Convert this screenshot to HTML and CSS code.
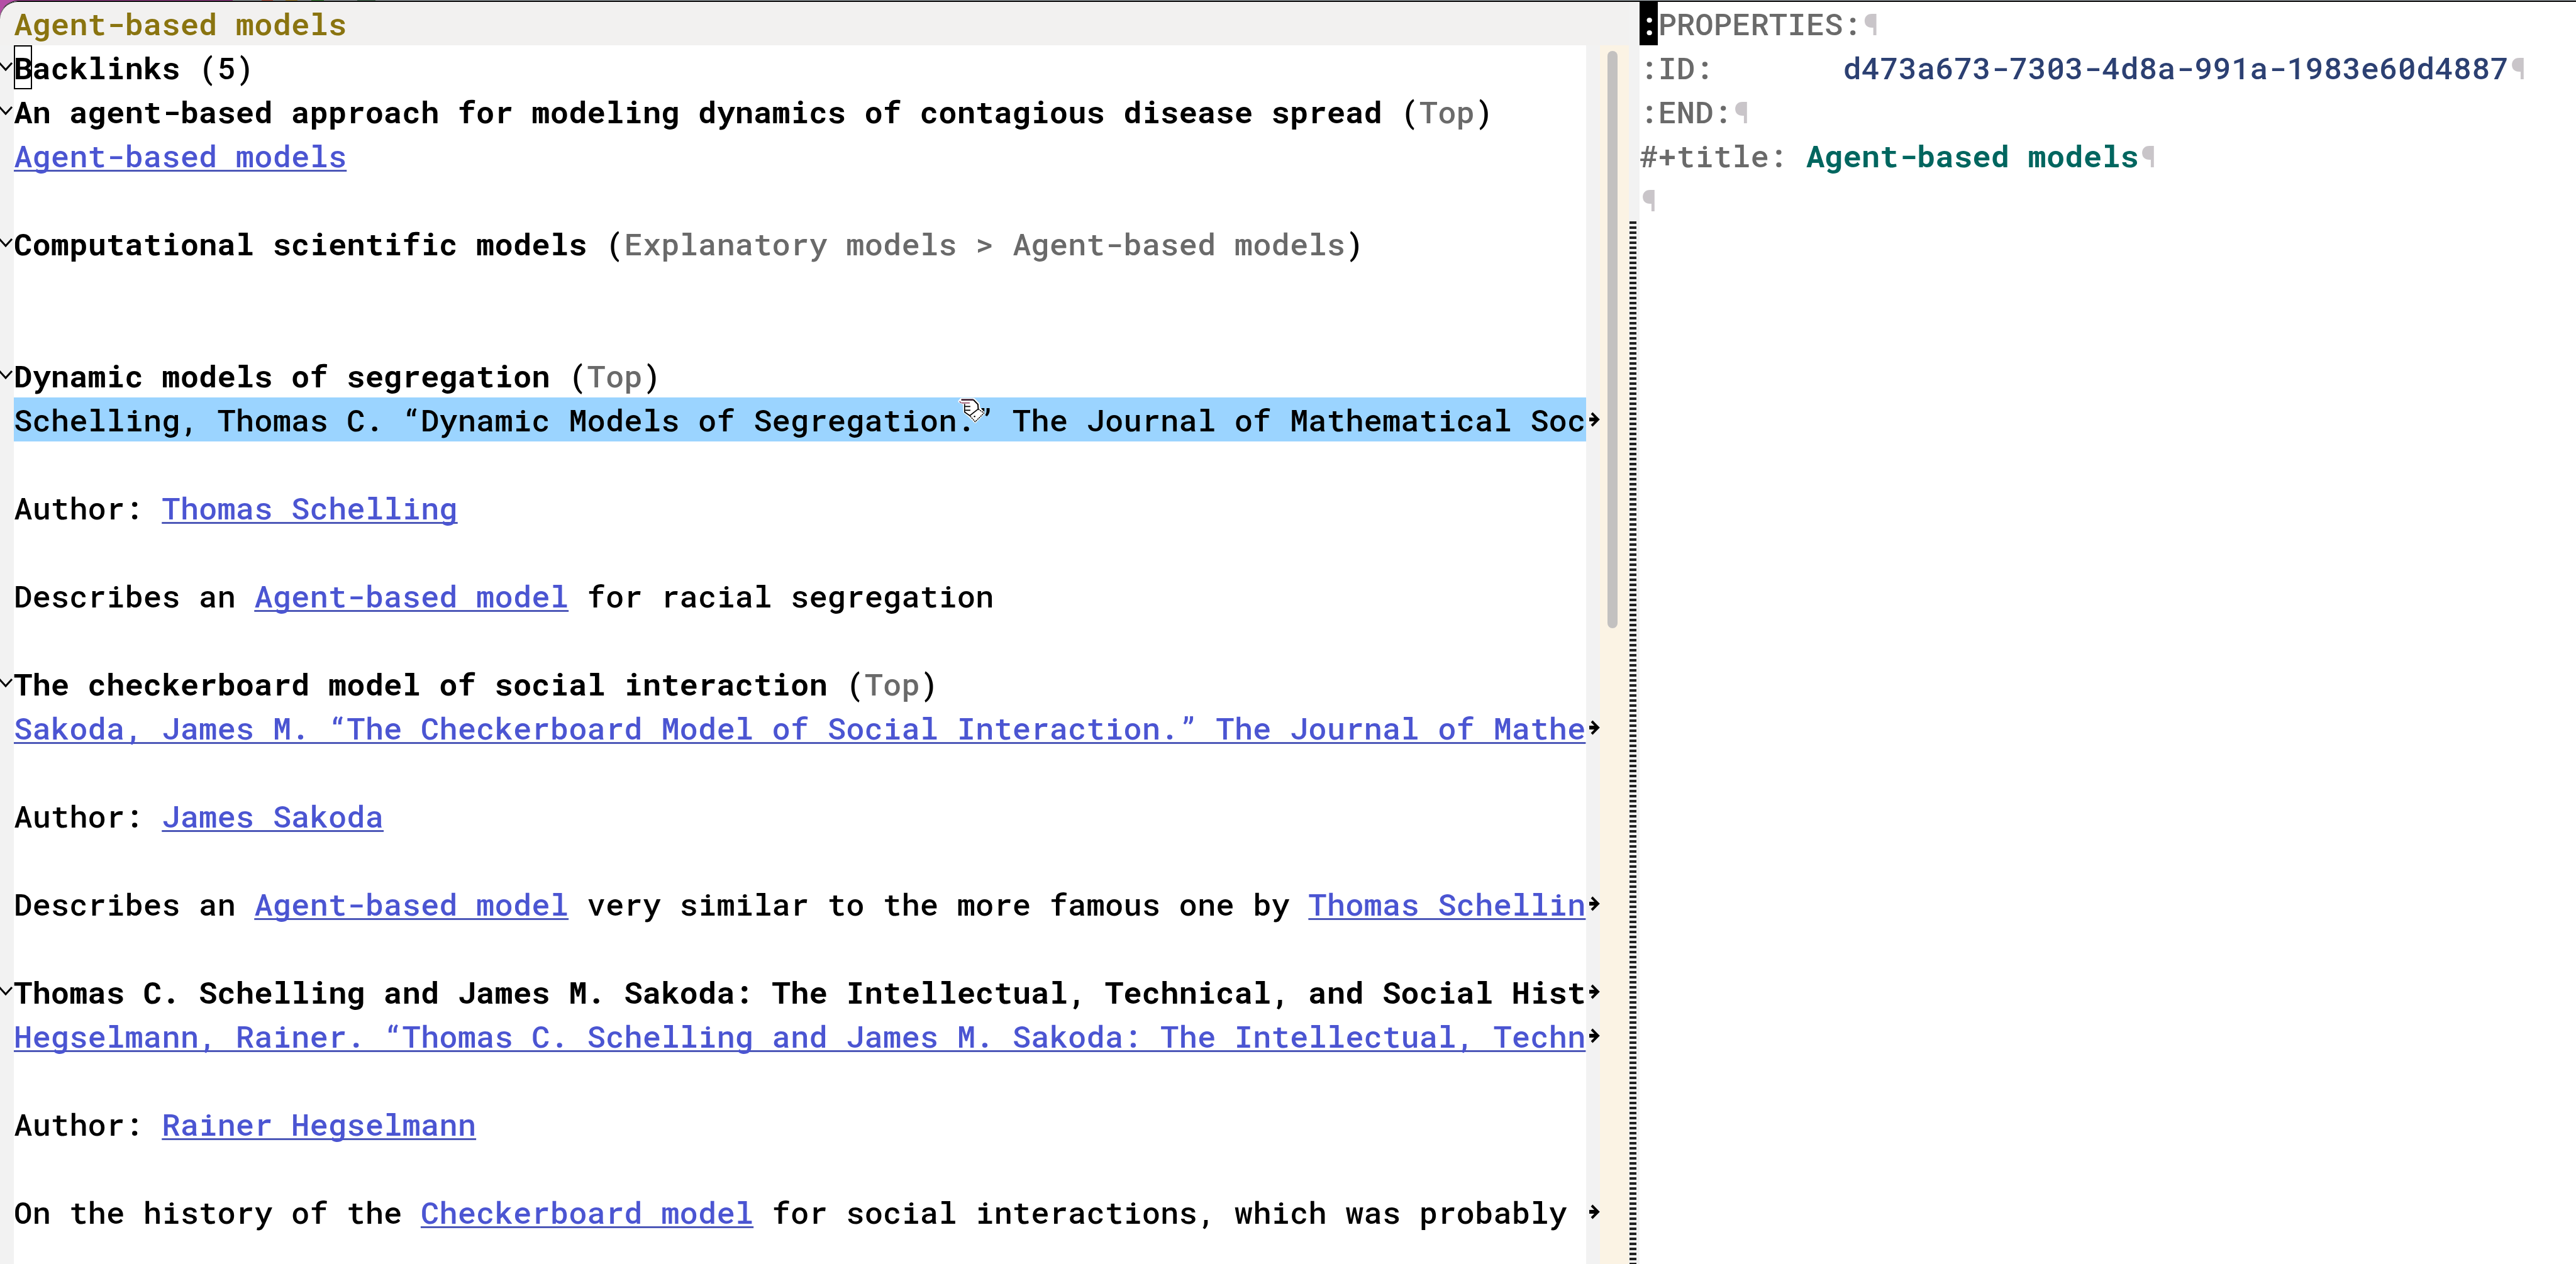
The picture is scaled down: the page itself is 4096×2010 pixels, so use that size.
FILE: index.html
```
<!DOCTYPE html>
<html lang="en">
<head>
<meta charset="utf-8">
<title>Agent-based models</title>
<link rel="stylesheet" href="styles.css">
</head>
<body>
<svg class="defs" aria-hidden="true">
  <symbol id="fold" viewBox="0 0 22 70">
    <path d="M-1 28 L9 39 L19 28" fill="none" stroke="#000" stroke-width="3"/>
  </symbol>
  <symbol id="more" viewBox="0 0 22 70">
    <path d="M5 35 H19" fill="none" stroke="#000" stroke-width="6"/>
    <path d="M9 25 L19 35 L9 45" fill="none" stroke="#000" stroke-width="4"/>
  </symbol>
</svg>
<div class="desktop"></div>
<div class="frame">
  <section class="backlinks" aria-label="Backlinks">
    <header class="header-line">Agent-based models</header>
    <div class="body">
      <main class="lines">
        <div class="line"><svg class="fringe"><use href="#fold"/></svg><div class="text"><b><span class="box-cursor">B</span>acklinks</b> (5)</div></div>
        <div class="line"><svg class="fringe"><use href="#fold"/></svg><div class="text"><b>An agent-based approach for modeling dynamics of contagious disease spread</b> (<span class="dim">Top</span>)</div></div>
        <div class="line"><div class="text"><a href="#agent-based-models">Agent-based models</a></div></div>
        <div class="line"><div class="text"></div></div>
        <div class="line"><svg class="fringe"><use href="#fold"/></svg><div class="text"><b>Computational scientific models</b> (<span class="dim">Explanatory models &gt; Agent-based models</span>)</div></div>
        <div class="line"><div class="text"></div></div>
        <div class="line"><div class="text"></div></div>
        <div class="line"><svg class="fringe"><use href="#fold"/></svg><div class="text"><b>Dynamic models of segregation</b> (<span class="dim">Top</span>)</div></div>
        <div class="line"><div class="text hover">Schelling, Thomas C. “Dynamic Models of Segregation.” The Journal of Mathematical Soc<svg class="pointer" viewBox="0 0 270 270" aria-hidden="true">
          <path d="M42 68 L55 52 H138 L170 84 L174 112 L206 145 L148 204 L106 162 L76 138 L74 84 Z" fill="#fff" stroke="#fff" stroke-width="14" stroke-linejoin="round"/>
          <path d="M56 57 H136" stroke="#3a1a2c" stroke-width="11" fill="none"/>
          <path d="M58 78 H112 M44 68 L56 78" stroke="#8a3a58" stroke-width="6" fill="none"/>
          <path d="M136 57 L166 88 L168 118" stroke="#000" stroke-width="8" fill="none"/>
          <path d="M78 84 V138 L112 162 L168 118" stroke="#000" stroke-width="7" fill="none"/>
          <path d="M80 101 H116 M80 126 H116" stroke="#000" stroke-width="7" fill="none"/>
          <path d="M168 118 L206 145 L148 202 L112 162" stroke="#000" stroke-width="6" stroke-dasharray="10 4" fill="none"/>
          <circle cx="144" cy="167" r="5" fill="#000"/>
        </svg></div><svg class="fringe end"><use href="#more"/></svg></div>
        <div class="line"><div class="text"></div></div>
        <div class="line"><div class="text">Author: <a href="#thomas-schelling">Thomas Schelling</a></div></div>
        <div class="line"><div class="text"></div></div>
        <div class="line"><div class="text">Describes an <a href="#agent-based-models">Agent-based model</a> for racial segregation</div></div>
        <div class="line"><div class="text"></div></div>
        <div class="line"><svg class="fringe"><use href="#fold"/></svg><div class="text"><b>The checkerboard model of social interaction</b> (<span class="dim">Top</span>)</div></div>
        <div class="line"><div class="text"><a href="#sakoda-paper">Sakoda, James M. “The Checkerboard Model of Social Interaction.” The Journal of Mathe</a></div><svg class="fringe end"><use href="#more"/></svg></div>
        <div class="line"><div class="text"></div></div>
        <div class="line"><div class="text">Author: <a href="#james-sakoda">James Sakoda</a></div></div>
        <div class="line"><div class="text"></div></div>
        <div class="line"><div class="text">Describes an <a href="#agent-based-models">Agent-based model</a> very similar to the more famous one by <a href="#thomas-schelling">Thomas Schellin</a></div><svg class="fringe end"><use href="#more"/></svg></div>
        <div class="line"><div class="text"></div></div>
        <div class="line"><svg class="fringe"><use href="#fold"/></svg><div class="text"><b>Thomas C. Schelling and James M. Sakoda: The Intellectual, Technical, and Social Hist</b></div><svg class="fringe end"><use href="#more"/></svg></div>
        <div class="line"><div class="text"><a href="#hegselmann-paper">Hegselmann, Rainer. “Thomas C. Schelling and James M. Sakoda: The Intellectual, Techn</a></div><svg class="fringe end"><use href="#more"/></svg></div>
        <div class="line"><div class="text"></div></div>
        <div class="line"><div class="text">Author: <a href="#rainer-hegselmann">Rainer Hegselmann</a></div></div>
        <div class="line"><div class="text"></div></div>
        <div class="line"><div class="text">On the history of the <a href="#checkerboard-model">Checkerboard model</a> for social interactions, which was probably</div><svg class="fringe end"><use href="#more"/></svg></div>
        <div class="line rest"><div class="text"></div></div>
      </main>
      <div class="scrollbar"><div class="thumb"></div></div>
    </div>
  </section>
  <section class="note" aria-label="Note">
    <div class="note-line dim"><span class="block-cursor">:</span>PROPERTIES:<span class="eol">¶</span></div>
    <div class="note-line dim">:ID:       <span class="value">d473a673-7303-4d8a-991a-1983e60d4887</span><span class="eol">¶</span></div>
    <div class="note-line dim">:END:<span class="eol">¶</span></div>
    <div class="note-line dim">#+title: <b class="doc-title">Agent-based models</b><span class="eol">¶</span></div>
    <div class="note-line"><span class="eol">¶</span></div>
    <div class="empty-lines"></div>
  </section>
</div>
</body>
</html>
```
FILE: styles.css
```
* { box-sizing: border-box; }

body {
  display: flex;
  flex-direction: column;
  height: 100vh;
  margin: 0;
  overflow: hidden;
  background: #b44ea6;
  color: #000;
  font-family: "Roboto Mono", "DejaVu Sans Mono", "Liberation Mono", monospace;
  font-size: 49px;
  font-weight: 500;
  line-height: 70px;
}

b { font-weight: 700; }

.defs { display: none; }

/* sliver of the desktop behind the frame */
.desktop {
  flex: none;
  height: 1px;
  background: linear-gradient(90deg,
    #b44ea6 370px, #b9c2c6 370px 416px, #dc7565 416px 434px,
    #b9c2c6 434px 454px, #c9a955 454px 473px, #b9c2c6 473px 495px,
    #4fa050 495px 515px, #b9c2c6 515px 568px, #638a72 568px 597px, #b9c2c6 597px);
}

.frame {
  flex: 1;
  min-height: 0;
  display: grid;
  grid-template-columns: 2590fr 1506fr;
  border-top: 1px solid #000;
  border-top-left-radius: 28px;
  overflow: hidden;
  background: #f2f2f2;
}

.backlinks {
  display: flex;
  flex-direction: column;
  min-width: 0;
  min-height: 0;
}

.header-line {
  flex: none;
  padding-left: 22px;
  border-top-left-radius: 28px;
  box-shadow: inset 0 1px #000;
  background: #f2f1f0;
  color: #8a7410;
  font-weight: 600;
}

.body {
  flex: 1;
  min-height: 0;
  display: flex;
}

.lines {
  flex: 1;
  min-width: 0;
  display: flex;
  flex-direction: column;
  overflow: hidden;
}

.line {
  flex: none;
  display: grid;
  grid-template-columns: 22px minmax(0, 1fr) 22px;
  min-height: 70px;
}

.fringe {
  display: block;
  grid-column: 1;
  grid-row: 1;
  width: 22px;
  height: 70px;
}

.fringe.end { grid-column: 3; }

.text {
  grid-column: 2;
  grid-row: 1;
  position: relative;
  overflow: hidden;
  white-space: pre;
  background: #fff;
}

.hover { background: #9bd4ff; }

.rest { flex: 1 0 auto; }

a {
  color: #4b55d2;
  text-decoration: underline;
  text-decoration-thickness: 3px;
  text-decoration-color: #4d58b8;
  text-decoration-skip-ink: none;
  text-underline-offset: 4px;
}

.dim { color: #6a6a6a; }

.box-cursor {
  display: inline-block;
  height: 70px;
  vertical-align: top;
  outline: 2px solid #000;
  outline-offset: -2px;
}

.pointer {
  position: absolute;
  left: 59.7%;
  top: -10px;
  width: 65px;
  height: 65px;
}

.scrollbar {
  flex: none;
  width: 46px;
  padding: 9px 18px 0 12px;
  background: #fbf3e4;
}

.thumb {
  height: 47.6%;
  border-radius: 8px;
  background: #c3c1c0;
}

.note {
  display: flex;
  flex-direction: column;
  min-width: 0;
  background: linear-gradient(90deg, #f2f2f2 17px, #fff 17px);
  box-shadow: inset 0 1px #000;
}

.note-line {
  flex: none;
  padding-left: 17px;
  white-space: pre;
}

.block-cursor {
  display: inline-block;
  vertical-align: top;
  background: #000;
  color: #fff;
}

.value { color: #2c4072; }
.doc-title { color: #00665f; }
.eol { color: #c9c5c9; }

.empty-lines {
  flex: 1;
  width: 11px;
  margin-left: 1px;
  background: repeating-linear-gradient(180deg, #222 0 4px, #f2f2f2 4px 8px);
}
```
